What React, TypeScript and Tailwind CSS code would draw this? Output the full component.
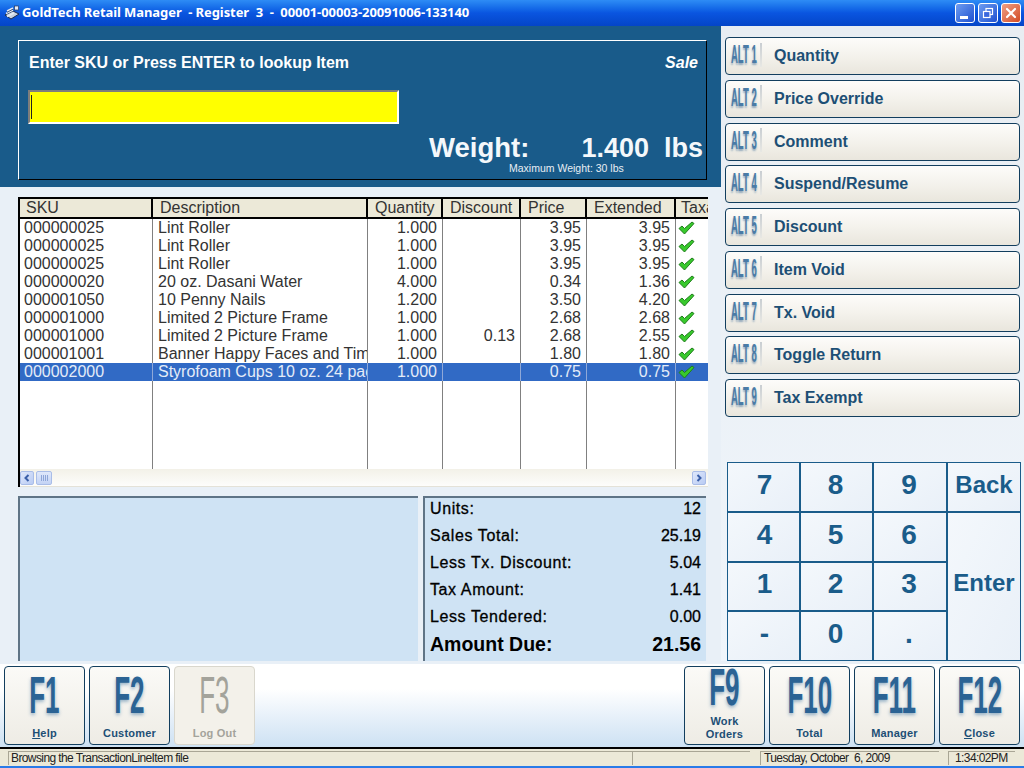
import React from "react";

const rows = [
  ["000000025", "Lint Roller", "1.000", "", "3.95", "3.95"],
  ["000000025", "Lint Roller", "1.000", "", "3.95", "3.95"],
  ["000000025", "Lint Roller", "1.000", "", "3.95", "3.95"],
  ["000000020", "20 oz. Dasani Water", "4.000", "", "0.34", "1.36"],
  ["000001050", "10 Penny Nails", "1.200", "", "3.50", "4.20"],
  ["000001000", "Limited 2 Picture Frame", "1.000", "", "2.68", "2.68"],
  ["000001000", "Limited 2 Picture Frame", "1.000", "0.13", "2.68", "2.55"],
  ["000001001", "Banner Happy Faces and Time Out", "1.000", "", "1.80", "1.80"],
  ["000002000", "Styrofoam Cups 10 oz. 24 pack", "1.000", "", "0.75", "0.75"],
];
const tpl = "grid grid-cols-[133px_215px_75px_78px_66px_89px_32px]";
const font = "font-['Liberation_Sans',Arial,sans-serif]";

function Check() {
  return (
    <svg width="17" height="14" viewBox="0 0 17 14" className="ml-[2px] mt-[2px]">
      <path d="M1 7.5 L4 5 L6.5 7.5 L14 1 L16 2.5 L6.5 13 Z" fill="#38c92c" stroke="#1f7d1b" strokeWidth="1" strokeLinejoin="round" />
    </svg>
  );
}

function AltButton({ n, label }: { n: number; label: string }) {
  return (
    <button className="h-[38px] w-[295px] shrink-0 rounded-[4px] border border-[#123e5e] bg-gradient-to-b from-[#fdfcfa] via-[#f4f2ec] to-[#e9e6dd] flex items-center overflow-hidden">
      <span className="w-[29px] ml-[5px] -mt-[4px] h-[26px] relative shrink-0">
        <span className="absolute left-0 top-0 origin-left scale-x-[0.38] text-[25px] leading-[26px] font-bold whitespace-nowrap text-[#4a7ba6] [text-shadow:0_2px_3px_rgba(40,90,140,0.45)]">
          ALT {n}
        </span>
      </span>
      <span className="w-[2px] h-[24px] -mt-[3px] bg-gradient-to-b from-[#c9ced2] to-[#e8e8e4] shrink-0" />
      <span className="ml-[12px] text-[16px] font-bold text-[#1d4f75]">{label}</span>
    </button>
  );
}

function Key({ children, className = "" }: { children: React.ReactNode; className?: string }) {
  return (
    <div className={`bg-gradient-to-br from-[#f4f8fc] to-[#e9f0f8] flex items-center justify-center font-bold text-[#1a5c8a] ${className}`}>
      {children}
    </div>
  );
}

function FKey({ k, children, disabled = false, two = false }: { k: string; children: React.ReactNode; disabled?: boolean; two?: boolean }) {
  return (
    <button className={`w-[81px] h-[79px] rounded-[4px] border flex flex-col items-center overflow-hidden ${disabled ? "border-[#d9d7cd] bg-[#f3f1ea] text-[#a3a39b]" : "border-[#123e5e] bg-gradient-to-b from-[#fbfaf7] to-[#eeece5] text-[#1d4f75]"}`}>
      <span className={`${two ? "h-[44px]" : "h-[54px]"} flex items-center justify-center shrink-0`}>
        <span className={`scale-x-[0.5] text-[52px] leading-[50px] whitespace-nowrap ${two ? "-mt-[4px]" : "mt-[1px]"} ${disabled ? "font-normal text-[#a3a39b]" : "font-bold text-[#2b6394] [text-shadow:0_2px_5px_rgba(40,100,150,0.45)]"}`}>
          {k}
        </span>
      </span>
      <span className="flex-1 flex items-center justify-center text-center text-[11px] leading-[13px] font-bold pt-[1px] tracking-[0.2px]">
        {children}
      </span>
    </button>
  );
}

function WinBtn({ children, red = false }: { children: React.ReactNode; red?: boolean }) {
  return (
    <div className={`w-[20px] h-[20px] rounded-[3px] border border-white flex items-center justify-center ${red ? "bg-gradient-to-br from-[#ee9f84] to-[#d2481f]" : "bg-gradient-to-br from-[#6f9cf0] to-[#1f4fd0]"}`}>
      {children}
    </div>
  );
}

function SumRow({ a, b, big = false }: { a: string; b: string; big?: boolean }) {
  return (
    <div className={`flex justify-between items-center ${big ? "h-[29px] text-[19.5px] font-bold" : "h-[27px] text-[16px] [-webkit-text-stroke:0.3px_#000]"} text-black`}>
      <span className={big ? "" : "tracking-[0.6px]"}>{a}</span>
      <span>{b}</span>
    </div>
  );
}

export default function App() {
  return (
    <div className={`w-[1024px] h-[768px] flex flex-col overflow-hidden bg-[#e9f0f7] ${font}`}>
      {/* Title bar */}
      <div className="h-[26px] shrink-0 flex items-center bg-gradient-to-b from-[#2e8cf5] via-[#0a55e0] to-[#0445c8] pl-[4px] pr-[3px]">
        <svg width="16" height="16" viewBox="0 0 16 16" className="shrink-0">
          <path d="M1 10 L9 6 L15 9 L7 14 Z" fill="#c9d3e2" stroke="#1b2a4a" strokeWidth="1" />
          <path d="M3 6 L9 3 M2 8.5 L9 5 M3 11.5 L10 8" stroke="#e4eaf2" strokeWidth="1.4" />
          <path d="M3 7.4 L9 4.2" stroke="#24365c" strokeWidth="0.8" />
          <rect x="10.5" y="1" width="4" height="4" fill="#e7edf7" stroke="#24365c" strokeWidth="0.7" />
        </svg>
        <span className="ml-[2px] font-['Noto_Sans',sans-serif] font-bold text-[13px] text-white whitespace-pre tracking-[-0.08px]">
          GoldTech Retail Manager  - Register  3  -  00001-00003-20091006-133140
        </span>
        <div className="ml-auto flex gap-[3px]">
          <WinBtn><span className="w-[8px] h-[3px] bg-white mt-[8px] -ml-[2px]" /></WinBtn>
          <WinBtn>
            <svg width="12" height="12" viewBox="0 0 12 12" fill="none" stroke="#fff" strokeWidth="1.2">
              <rect x="4" y="1.5" width="6.5" height="6" />
              <rect x="1.5" y="4.5" width="6.5" height="6" fill="#3a68de" />
            </svg>
          </WinBtn>
          <WinBtn red>
            <svg width="12" height="12" viewBox="0 0 12 12" stroke="#fff" strokeWidth="2.2" strokeLinecap="round">
              <path d="M2 2 L10 10 M10 2 L2 10" />
            </svg>
          </WinBtn>
        </div>
      </div>

      {/* Main */}
      <div className="h-[635px] shrink-0 flex">
        {/* Left */}
        <div className="w-[721px] shrink-0 flex flex-col">
          <div className="h-[161px] shrink-0 bg-[#195b8a] pl-[18px] pr-[14px] pt-[14px]">
            <div className="h-[140px] border-[1.5px] border-t-white border-l-white border-r-black border-b-black pl-[10px] pr-[3px] pt-[13px] flex flex-col text-white">
              <div className="flex justify-between items-center h-[18px] pr-[5px]">
                <span className="text-[16px] font-bold">Enter SKU or Press ENTER to lookup Item</span>
                <span className="text-[16px] font-bold italic">Sale</span>
              </div>
              <div className="mt-[18px] -ml-[1px] w-[371px] h-[34px] bg-[#ffff00] border-2 border-t-[#7d7d7d] border-l-[#7d7d7d] border-b-white border-r-white flex items-center pl-[1px] shrink-0">
                <span className="w-[1px] h-[24px] bg-[#222]" />
              </div>
              <div className="flex justify-end items-center h-[30px] mt-[9px] text-[27px] font-bold leading-none text-[#f4f8fb]">
                <span className="text-[27.5px]">Weight:</span>
                <span className="ml-[52px]">1.400</span>
                <span className="ml-[15px]">lbs</span>
              </div>
              <div className="text-[10.5px] leading-[12px] -mt-[1px] ml-[480px] whitespace-nowrap text-[#e8eef4]">Maximum Weight: 30 lbs</div>
            </div>
          </div>

          <div className="flex-1 px-[18px] pt-[10px] pr-[13px] flex flex-col">
            {/* Grid */}
            <div className="h-[290px] shrink-0 border-t-2 border-l-2 border-black flex flex-col bg-white text-[16px] text-[#333] overflow-hidden">
              <div className={`${tpl} h-[20px] shrink-0 bg-[#ece9d8] border-b-2 border-black`}>
                {["SKU", "Description", "Quantity", "Discount", "Price", "Extended", "Taxa"].map((h, i) => (
                  <div key={h} className={`leading-[17px] overflow-hidden whitespace-nowrap ${i === 0 ? "pl-[6px]" : i === 6 ? "pl-[5px]" : "pl-[7px]"} ${i < 6 ? "border-r-2 border-black" : ""}`}>
                    {h}
                  </div>
                ))}
              </div>
              {rows.map((r, i) => {
                const sel = i === 8;
                const line = sel ? "border-r border-[#8fa8d8]" : "border-r border-[#808080]";
                return (
                  <div key={i} className={`${tpl} h-[18px] shrink-0 leading-[18px] ${sel ? "bg-[#316ac5] text-[#e4ecf8]" : ""}`}>
                    <div className={`pl-[4px] ${line}`}>{r[0]}</div>
                    <div className={`pl-[5px] overflow-hidden whitespace-nowrap ${line}`}>{r[1]}</div>
                    <div className={`text-right pr-[5px] ${line}`}>{r[2]}</div>
                    <div className={`text-right pr-[5px] ${line}`}>{r[3]}</div>
                    <div className={`text-right pr-[5px] ${line}`}>{r[4]}</div>
                    <div className={`text-right pr-[5px] ${line}`}>{r[5]}</div>
                    <div className="overflow-hidden"><Check /></div>
                  </div>
                );
              })}
              <div className={`${tpl} flex-1`}>
                {[0, 1, 2, 3, 4, 5].map((c) => (
                  <div key={c} className="border-r border-[#808080]" />
                ))}
                <div />
              </div>
              <div className="h-[18px] shrink-0 bg-gradient-to-b from-[#f3f1e8] to-[#fdfdfb] flex items-center pr-[1px] border-b border-[#e4e2d8]">
                <span className="w-[14px] h-[14px] rounded-[2px] bg-gradient-to-br from-[#dfe8fb] to-[#b9cbf3] border border-[#a9bde8] flex items-center justify-center">
                  <svg width="8" height="8" viewBox="0 0 8 8" fill="none" stroke="#3a5fa8" strokeWidth="2"><path d="M5.5 1 L2.5 4 L5.5 7" /></svg>
                </span>
                <span className="ml-[2px] w-[16px] h-[14px] rounded-[2px] bg-gradient-to-b from-[#dfe8fb] to-[#c3d3f5] border border-[#a9bde8] flex items-center justify-center gap-[1px]">
                  {[0, 1, 2, 3].map((x) => <i key={x} className="w-[1px] h-[6px] bg-[#8ea6d8]" />)}
                </span>
                <span className="ml-auto mr-[1px] w-[14px] h-[14px] rounded-[2px] bg-gradient-to-br from-[#dfe8fb] to-[#b9cbf3] border border-[#a9bde8] flex items-center justify-center">
                  <svg width="8" height="8" viewBox="0 0 8 8" fill="none" stroke="#3a5fa8" strokeWidth="2"><path d="M2.5 1 L5.5 4 L2.5 7" /></svg>
                </span>
              </div>
            </div>

            {/* Bottom panels */}
            <div className="mt-[9px] h-[165px] flex gap-[5px]">
              <div className="w-[400px] border-t-2 border-l-2 border-[#5f7486] bg-[#cfe3f4]" />
              <div className="w-[283px] border-t-2 border-l-2 border-[#5f7486] bg-[#cfe3f4] px-[5px] overflow-hidden">
                <div className="-mt-[3px]">
                  <SumRow a="Units:" b="12" />
                  <SumRow a="Sales Total:" b="25.19" />
                  <SumRow a="Less Tx. Discount:" b="5.04" />
                  <SumRow a="Tax Amount:" b="1.41" />
                  <SumRow a="Less Tendered:" b="0.00" />
                  <SumRow a="Amount Due:" b="21.56" big />
                </div>
              </div>
            </div>
          </div>
        </div>

        {/* Right */}
        <div className="flex-1 flex flex-col pt-[11px] pl-[4px] bg-gradient-to-b from-[#e8edf2] to-[#eff5fb]">
          <div className="flex flex-col gap-[4.75px]">
            <AltButton n={1} label="Quantity" />
            <AltButton n={2} label="Price Override" />
            <AltButton n={3} label="Comment" />
            <AltButton n={4} label="Suspend/Resume" />
            <AltButton n={5} label="Discount" />
            <AltButton n={6} label="Item Void" />
            <AltButton n={7} label="Tx. Void" />
            <AltButton n={8} label="Toggle Return" />
            <AltButton n={9} label="Tax Exempt" />
          </div>
          <div className="mt-auto ml-[2px] w-[294px] h-[199px] bg-[#1a5c8a] p-[1px] grid grid-cols-[71px_71px_72px_72px] grid-rows-4 gap-[2px] text-[28px]">
            <Key className="pl-[2px] pb-[4px]">7</Key>
            <Key className="pr-[2px] pb-[4px]">8</Key>
            <Key className="pr-[2px] pb-[4px]">9</Key>
            <Key className="text-[24px] pb-[4px]">Back</Key>
            <Key className="pl-[2px] pb-[4px]">4</Key>
            <Key className="pr-[2px] pb-[4px]">5</Key>
            <Key className="pr-[2px] pb-[4px]">6</Key>
            <Key className="row-span-3 text-[24px] pb-[6px]">Enter</Key>
            <Key className="pl-[2px] pb-[4px]">1</Key>
            <Key className="pr-[2px] pb-[4px]">2</Key>
            <Key className="pr-[2px] pb-[4px]">3</Key>
            <Key className="pl-[2px] pb-[4px]">-</Key>
            <Key className="pr-[2px] pb-[4px]">0</Key>
            <Key className="pr-[2px] pb-[4px]">.</Key>
          </div>
        </div>
      </div>

      {/* Function keys */}
      <div className="h-[86px] shrink-0 border-t-[3px] border-[#e9f0f7] bg-gradient-to-b from-white from-30% to-[#cde1f3] flex items-start justify-between pt-[2px] px-[4px]">
        <div className="flex gap-[4px]">
          <FKey k="F1"><span><u>H</u>elp</span></FKey>
          <FKey k="F2">Customer</FKey>
          <FKey k="F3" disabled>Log Out</FKey>
        </div>
        <div className="flex gap-[4px]">
          <FKey k="F9" two>Work<br />Orders</FKey>
          <FKey k="F10">Total</FKey>
          <FKey k="F11">Manager</FKey>
          <FKey k="F12"><span><u>C</u>lose</span></FKey>
        </div>
      </div>

      {/* Status bar */}
      <div className="h-[19px] shrink-0 bg-[#ece9d8] border-t-2 border-black flex items-end pl-[8px] text-[12px] tracking-[-0.6px] leading-[13px] text-[#222] pb-[1px]">
        <div className="w-[624px] h-[14px] border-t border-l border-[#a9a695] pl-[2px] whitespace-nowrap">Browsing the TransactionLineItem file</div>
        <div className="w-[118px] h-[14px] border-t border-l border-[#a9a695]" />
        <div className="ml-[10px] w-[179px] h-[14px] border-t border-l border-[#a9a695] pl-[3px] whitespace-pre">Tuesday, October  6, 2009</div>
        <div className="ml-[9px] w-[67px] h-[14px] border-t border-l border-[#a9a695] pl-[6px]">1:34:02PM</div>
      </div>
      <div className="flex-1 bg-[#2a7be8]" />
    </div>
  );
}
